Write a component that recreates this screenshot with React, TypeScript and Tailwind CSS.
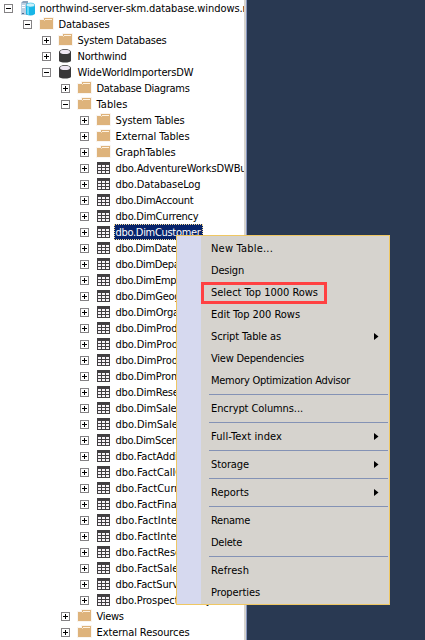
import { useLayoutEffect, useRef } from "react";

type Icon = "server" | "folder" | "db" | "table";
type Row = { level: number; icon: Icon; text: string; w: number; open?: boolean; selected?: boolean };

const t = (text: string, w: number, selected = false): Row => ({ level: 4, icon: "table", text, w, selected });

const rows: Row[] = [
  { level: 0, icon: "server", text: "northwind-server-skm.database.windows.net", w: 219, open: true },
  { level: 1, icon: "folder", text: "Databases", w: 51, open: true },
  { level: 2, icon: "folder", text: "System Databases", w: 89 },
  { level: 2, icon: "db", text: "Northwind", w: 49 },
  { level: 2, icon: "db", text: "WideWorldImportersDW", w: 116, open: true },
  { level: 3, icon: "folder", text: "Database Diagrams", w: 93 },
  { level: 3, icon: "folder", text: "Tables", w: 31, open: true },
  { level: 4, icon: "folder", text: "System Tables", w: 69 },
  { level: 4, icon: "folder", text: "External Tables", w: 74 },
  { level: 4, icon: "folder", text: "GraphTables", w: 60 },
  t("dbo.AdventureWorksDWBuildVersion", 178),
  t("dbo.DatabaseLog", 85),
  t("dbo.DimAccount", 78),
  t("dbo.DimCurrency", 83),
  t("dbo.DimCustomer", 85, true),
  t("dbo.DimDate", 61),
  t("dbo.DimDepartmentGroup", 124),
  t("dbo.DimEmployee", 86),
  t("dbo.DimGeography", 92),
  t("dbo.DimOrganization", 101),
  t("dbo.DimProduct", 77),
  t("dbo.DimProductCategory", 122),
  t("dbo.DimProductSubcategory", 139),
  t("dbo.DimPromotion", 89),
  t("dbo.DimReseller", 78),
  t("dbo.DimSalesReason", 101),
  t("dbo.DimSalesTerritory", 108),
  t("dbo.DimScenario", 80),
  t("dbo.FactAdditionalInternationalProductDescription", 243),
  t("dbo.FactCallCenter", 93),
  t("dbo.FactCurrencyRate", 109),
  t("dbo.FactFinance", 79),
  t("dbo.FactInternetSales", 109),
  t("dbo.FactInternetSalesReason", 144),
  t("dbo.FactResellerSales", 108),
  t("dbo.FactSalesQuota", 98),
  t("dbo.FactSurveyResponse", 121),
  t("dbo.ProspectiveBuyer", 106),
  { level: 3, icon: "folder", text: "Views", w: 27 },
  { level: 3, icon: "folder", text: "External Resources", w: 93 },
];

type Item = { text: string; w: number; sub?: boolean; marked?: boolean };
const menu: Item[][] = [
  [
    { text: "New Table...", w: 62 },
    { text: "Design", w: 33 },
    { text: "Select Top 1000 Rows", w: 107, marked: true },
    { text: "Edit Top 200 Rows", w: 89 },
    { text: "Script Table as", w: 70, sub: true },
    { text: "View Dependencies", w: 93 },
    { text: "Memory Optimization Advisor", w: 139 },
  ],
  [{ text: "Encrypt Columns...", w: 92 }],
  [{ text: "Full-Text index", w: 71, sub: true }],
  [{ text: "Storage", w: 38, sub: true }],
  [{ text: "Reports", w: 38, sub: true }],
  [{ text: "Rename", w: 39 }, { text: "Delete", w: 31 }],
  [{ text: "Refresh", w: 38 }, { text: "Properties", w: 49 }],
];

/* Spaces the letters so that a label takes the width of its Tahoma metrics. */
function Label({ text, w }: { text: string; w: number }) {
  const ref = useRef<HTMLSpanElement>(null);
  useLayoutEffect(() => {
    const el = ref.current;
    if (!el) return;
    el.style.letterSpacing = "0px";
    const natural = el.getBoundingClientRect().width;
    el.style.letterSpacing = `${(w - natural) / text.length}px`;
  }, [text, w]);
  return <span ref={ref} className="inline-block whitespace-pre">{text}</span>;
}

function Expander({ open }: { open?: boolean }) {
  return (
    <svg width="9" height="9" className="mt-1 block shrink-0" shapeRendering="crispEdges">
      <rect x=".5" y=".5" width="8" height="8" fill="#fff" stroke="#848284" />
      <path d={open ? "M2 4h5v1H2z" : "M2 4h5v1H2zM4 2h1v5H4z"} fill="#000" />
    </svg>
  );
}

function RowIcon({ kind }: { kind: Icon }) {
  if (kind === "server")
    return (
      <svg width="16" height="16" viewBox="0 0 16 16" className="block">
        <path d="M1 3L3 1H8V15H1Z" fill="#8ba3bd" />
        <path d="M1 3H6V15H1Z" fill="#bccfe2" />
        <path d="M2 5.5H5M2 7.5H5" stroke="#fff" />
        <path d="M2 13.5H4" stroke="#4d6b8c" />
        <path d="M6 5V14Q10.500 17 15 14V5Z" fill="#18b6e7" />
        <path d="M7 6V14L9 15V6Z" fill="#63d9f7" />
        <ellipse cx="10.5" cy="5" rx="4.3" ry="2" fill="#c9f1fb" stroke="#39bde5" strokeWidth=".7" />
      </svg>
    );
  if (kind === "folder")
    return (
      <svg width="16" height="16" viewBox="0 0 16 16" className="block" shapeRendering="crispEdges">
        <path d="M0 3H4V1H15V14H0Z" fill="#faf5f0" />
        <path d="M1 4H5V2H14V13H1Z" fill="#deb37b" />
        <path d="M6 3H13V4H6Z" fill="#fff3e2" />
        <path d="M5 4H6V5H5Z" fill="#f0d9bb" />
      </svg>
    );
  if (kind === "db")
    return (
      <svg width="16" height="16" viewBox="0 0 16 16" className="block">
        <path d="M1 4V12.500C1 15.200 13 15.200 13 12.500V4Z" fill="#393839" />
        <ellipse cx="7" cy="4" rx="6" ry="3" fill="#393839" />
        <ellipse cx="7" cy="3.9" rx="5" ry="2.1" fill="#efe7f3" />
      </svg>
    );
  return (
    <svg width="16" height="16" viewBox="0 0 16 16" className="block" shapeRendering="crispEdges">
      <path d="M1 2H14V14H1Z" fill="#423f42" />
      <path d="M2 5h3v2H2zM6 5h3v2H6zM10 5h3v2h-3zM2 8h3v2H2zM6 8h3v2H6zM10 8h3v2h-3zM2 11h3v2H2zM6 11h3v2H6zM10 11h3v2h-3z" fill="#f7f3f7" />
    </svg>
  );
}

const indent = ["pl-[4px]", "pl-[23px]", "pl-[42px]", "pl-[61px]", "pl-[80px]"];

export default function App() {
  return (
    <div className="relative flex h-[640px] w-[425px] overflow-hidden bg-[#293952] font-['DejaVu_Sans_Condensed','DejaVu_Sans',sans-serif] text-[11px] [font-stretch:condensed] leading-4 text-black">
      <div className="h-full w-[244px] shrink-0 overflow-hidden bg-white">
        {rows.map((r, i) => (
          <div key={i} className={`flex h-4 items-start whitespace-nowrap ${indent[r.level]}`}>
            <Expander open={r.open} />
            <span className="ml-[7px] shrink-0"><RowIcon kind={r.icon} /></span>
            <span className={`ml-[2px] flex h-4 shrink-0 items-start pl-[1.5px] pt-px ${r.selected ? "w-[89px] bg-[#08246b] text-white outline-1 -outline-offset-1 outline-dotted outline-[#f7db94]" : ""}`}>
              <Label text={r.text} w={r.w} />
            </span>
          </div>
        ))}
      </div>
      <div className="h-full w-[2px] shrink-0 bg-[#d6d3ce]" />
      <div className="h-full w-px shrink-0 bg-[#8494bd]" />

      <div className="absolute left-[176px] top-[235px] flex h-[370px] w-[214px] border border-[#efc763] bg-[#d6d3ce]">
        <div className="w-[24px] shrink-0 bg-[#d6d9ef]" />
        <div className="flex flex-1 flex-col pt-px">
          {menu.map((group, g) => (
            <div key={g}>
              {g > 0 && (
                <div className="flex h-[6px] items-center pl-[8px] pr-px">
                  <div className="h-px w-full bg-[#8492b5]" />
                </div>
              )}
              {group.map((it) => (
                <div key={it.text} className="relative flex h-[22px] items-start justify-between pl-[10px] pr-[10px] pt-1">
                  <Label text={it.text} w={it.w} />
                  {it.sub && <svg width="5" height="7" className="mt-1 block"><path d="M0 0L4.500 3.500L0 7Z" fill="#000" /></svg>}
                  {it.marked && <div className="absolute left-0 top-px h-[22px] w-[126px] border-[3px] border-[#ff4142]" />}
                </div>
              ))}
            </div>
          ))}
        </div>
      </div>
    </div>
  );
}
